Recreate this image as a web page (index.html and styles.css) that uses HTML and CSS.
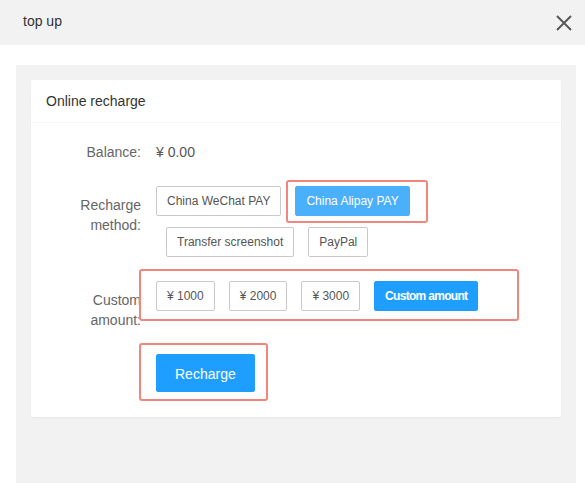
FILE: index.html
```html
<!DOCTYPE html>
<html lang="en">
<head>
<meta charset="utf-8">
<title>top up</title>
<link rel="stylesheet" href="styles.css">
</head>
<body>
  <header class="layer-title">
    <span class="title-text">top up</span>
    <button class="close-btn" aria-label="close">
      <svg width="16" height="16" viewBox="0 0 16 16"><path d="M1 1 L15 15 M15 1 L1 15" stroke="#555" stroke-width="1.9" fill="none"/></svg>
    </button>
  </header>
  <main class="panel">
    <section class="card">
      <div class="card-header">Online recharge</div>
      <div class="card-body">
        <div class="form-item">
          <label class="form-label">Balance:</label>
          <div class="form-block value">¥ 0.00</div>
        </div>
        <div class="form-item">
          <label class="form-label">Recharge method:</label>
          <div class="form-block methods">
            <div class="btn-row">
              <button class="btn btn-sm btn-primary">China WeChat PAY</button>
              <button class="btn btn-sm btn-light">China Alipay PAY</button>
            </div>
            <div class="btn-row indent">
              <button class="btn btn-sm btn-primary">Transfer screenshot</button>
              <button class="btn btn-sm btn-primary">PayPal</button>
            </div>
          </div>
        </div>
        <div class="form-item">
          <label class="form-label">Custom amount:</label>
          <div class="form-block">
            <div class="btn-row">
              <button class="btn btn-sm btn-primary">¥ 1000</button>
              <button class="btn btn-sm btn-primary">¥ 2000</button>
              <button class="btn btn-sm btn-primary">¥ 3000</button>
              <button class="btn btn-sm btn-normal bold">Custom amount</button>
            </div>
          </div>
        </div>
        <div class="form-item">
          <div class="form-label"></div>
          <div class="form-block">
            <button class="btn btn-normal">Recharge</button>
          </div>
        </div>
      </div>
      <div class="mark mark-1"></div>
      <div class="mark mark-2"></div>
      <div class="mark mark-3"></div>
    </section>
  </main>
</body>
</html>
```
FILE: styles.css
```css
html, body {
  margin: 0;
  padding: 0;
  background: #fff;
  font-family: "Liberation Sans", Arial, sans-serif;
  font-size: 14px;
  color: #333;
  overflow: hidden;
}

.layer-title {
  height: 45px;
  background: #f2f2f2;
  display: flex;
  align-items: center;
  justify-content: space-between;
  padding: 0 13px 0 23px;
  box-sizing: border-box;
}

.title-text {
  font-size: 14px;
  color: #333;
  padding-bottom: 3px;
}

.close-btn {
  border: 0;
  background: none;
  padding: 0;
  width: 16px;
  height: 16px;
  display: block;
  cursor: pointer;
}

.close-btn svg {
  display: block;
}

.panel {
  display: block;
  margin: 20px 9px 0 16px;
  padding: 15px;
  background: #f2f2f2;
  height: 418px;
  box-sizing: border-box;
}

.card {
  position: relative;
  background: #fff;
  border-radius: 2px;
  box-shadow: 0 1px 2px 0 rgba(0, 0, 0, 0.05);
}

.card-header {
  height: 42px;
  line-height: 42px;
  padding: 0 15px;
  border-bottom: 1px solid #f6f6f6;
  color: #333;
  font-size: 14px;
}

.card-body {
  padding: 10px 15px;
}

.form-item {
  display: flex;
  align-items: flex-start;
  margin-bottom: 15px;
}

.form-label {
  flex: none;
  width: 110px;
  box-sizing: border-box;
  padding: 9px 15px;
  line-height: 20px;
  text-align: right;
  color: #666;
  font-size: 14px;
}

.form-block {
  flex: 1;
  min-width: 0;
}

.value {
  line-height: 38px;
  color: #555;
}

.methods {
  display: flex;
  flex-direction: column;
  gap: 11px;
  padding-bottom: 9px;
}

.btn-row {
  display: flex;
  gap: 14px;
}

.btn-row.indent {
  padding-left: 10px;
}

.btn {
  display: inline-block;
  height: 38px;
  line-height: 38px;
  padding: 0 18px;
  border: 1px solid transparent;
  border-radius: 2px;
  font-family: inherit;
  font-size: 14px;
  color: #fff;
  white-space: nowrap;
  cursor: pointer;
  box-sizing: border-box;
}

.btn-sm {
  height: 30px;
  line-height: 28px;
  padding: 0 10px;
  font-size: 12px;
}

.btn-primary {
  background: #fff;
  border-color: #c9c9c9;
  color: #555;
}

.btn-normal {
  background: #1e9fff;
  border-color: #1e9fff;
}

.btn-light {
  background: #4bb0fb;
  border-color: #4bb0fb;
}

.bold {
  font-weight: bold;
  letter-spacing: -0.7px;
}

.mark {
  position: absolute;
  border: 2px solid #f1867f;
  border-radius: 3px;
  box-sizing: border-box;
  pointer-events: none;
}

.mark-1 {
  left: 255px;
  top: 100px;
  width: 142px;
  height: 43px;
}

.mark-2 {
  left: 108px;
  top: 189px;
  width: 380px;
  height: 52px;
}

.mark-3 {
  left: 108px;
  top: 263px;
  width: 129px;
  height: 58px;
}
```
